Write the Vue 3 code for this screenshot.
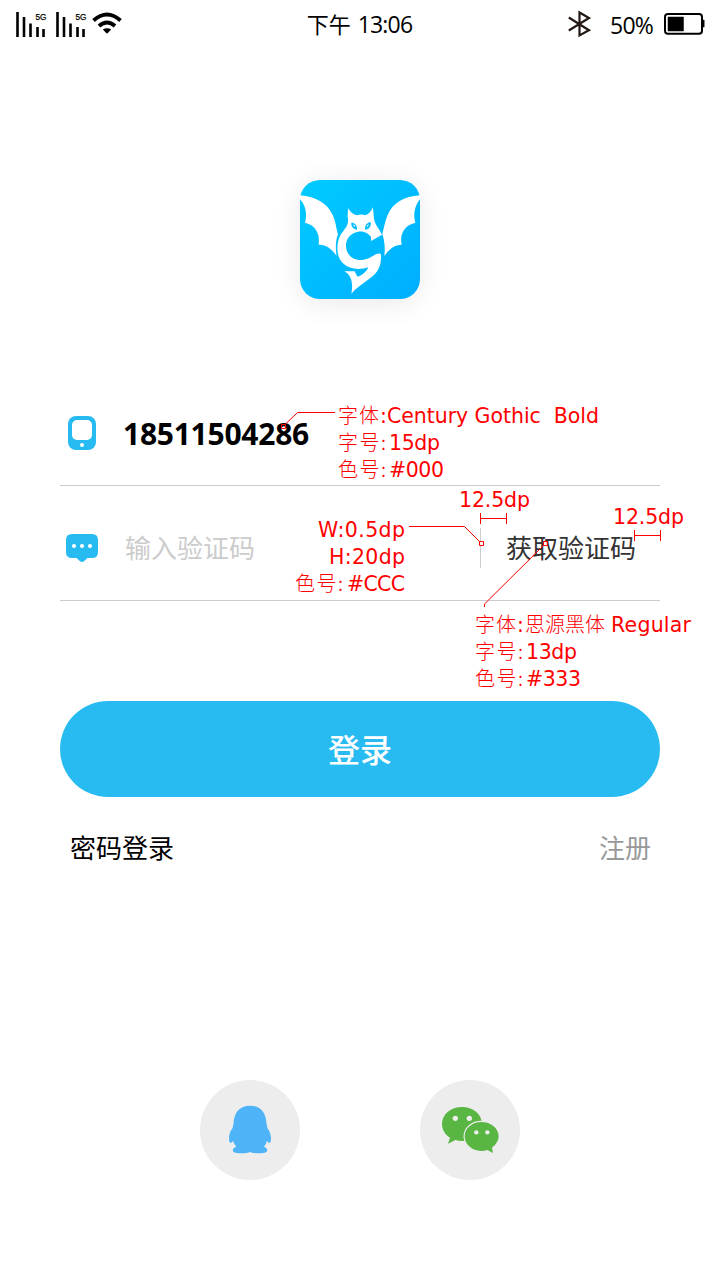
<script setup>
const notes = [
  { x: 338, y: 423, w: 41, t: '字体', thin: true },
  { x: 380, y: 423, w: 219, t: ':Century Gothic\u00a0 Bold' },
  { x: 338, y: 450, w: 48, t: '字号:', thin: true },
  { x: 389, y: 450, w: 51, t: '15dp' },
  { x: 338, y: 477, w: 48, t: '色号:', thin: true },
  { x: 389, y: 477, w: 55, t: '#000' },
  { x: 459, y: 507, w: 71, t: '12.5dp' },
  { x: 613, y: 524, w: 71, t: '12.5dp' },
  { x: 318, y: 537, w: 87, t: 'W:0.5dp' },
  { x: 329, y: 564, w: 76, t: 'H:20dp' },
  { x: 295, y: 591, w: 48, t: '色号:', thin: true },
  { x: 347, y: 591, w: 58, t: '#CCC' },
  { x: 475, y: 632, w: 41, t: '字体', thin: true },
  { x: 517, y: 632, w: 7, t: ':' },
  { x: 525, y: 632, w: 80, t: '思源黑体', thin: true },
  { x: 611, y: 632, w: 80, t: 'Regular' },
  { x: 475, y: 659, w: 48, t: '字号:', thin: true },
  { x: 526, y: 659, w: 51, t: '13dp' },
  { x: 475, y: 686, w: 48, t: '色号:', thin: true },
  { x: 526, y: 686, w: 55, t: '#333' },
]
</script>

<template>
  <div class="screen">
    <header class="status">
      <div class="left">
        <svg v-for="n in 2" :key="n" class="signal" width="40" height="28" viewBox="0 0 40 28">
          <path d="M1.5 2v25M8 7v20M14.5 13.500v13.500M21.500 17v10M27.500 19v8" stroke="#000" stroke-width="2.6" />
          <text x="19.500" y="10" textLength="11" lengthAdjust="spacingAndGlyphs">5G</text>
        </svg>
        <svg class="wifi" width="30" height="24" viewBox="0 0 30 24">
          <path d="M1.500 8.500Q15-3.500 28.500 8.500M7 14Q15 7 23 14" fill="none" stroke="#000" stroke-width="3.800" />
          <path d="M10.800 17.500Q15 14.800 19.200 17.500L15 21.800Z" />
        </svg>
      </div>
      <div class="time"><span class="ampm">下午</span><span class="clock">13:06</span></div>
      <div class="right">
        <svg width="24" height="28" viewBox="0 0 24 28">
          <path d="M.8 7.500 21 20.200 11.500 25.500V2.500L21 8 .8 20.500" fill="none" stroke="#231815" stroke-width="2.200" />
        </svg>
        <span class="percent">50%</span>
        <svg width="42" height="24" viewBox="0 0 42 24">
          <rect x="2" y="2" width="37" height="19.800" rx="3" fill="none" stroke="#000" stroke-width="2" />
          <path d="M5 5h15.500v14H5zM40 8h1.200v7H40z" stroke="#000" stroke-width=".5" />
        </svg>
      </div>
    </header>

    <div class="logo">
      <svg width="120" height="119" viewBox="30 30 360 357">
        <g fill="#fff">
          <path d="M30 76C78 80 112 100 128 135C138 158 139 177 144 193C137 210 136 234 140 258C125 236 108 223 86 224C91 190 76 165 45 158C53 132 46 105 30 88Z" />
          <path d="M390 76C342 79 308 98 292 137C284 158 281 177 277 192C284 213 286 236 283 258C299 235 315 224 335 224C328 190 345 165 376 158C369 132 374 108 390 88Z" />
          <path fill-rule="evenodd" d="M175 115C181 127 190 134 201 136C210 133 219 133 226 136C237 132 244 124 248 112C252 128 249 145 257 162C264 174 271 184 276 194L243 213V201C233 186 217 183 204 185C181 189 167 207 168 229C169 253 187 270 211 270C230 270 242 261 250 257C259 251 269 248 273 253C275 288 263 309 240 325C217 342 199 354 184 371C190 341 185 315 163 304L194 304Q199 317 204 320C219 314 230 305 235 292C199 303 169 294 153 273C138 252 139 216 153 193C163 177 175 169 174 149C172 136 173 126 175 115ZM184 158C183 171 190 177 201 179C202 167 196 158 184 158ZM242 156C230 158 224 166 225 179C236 178 244 170 242 156Z" />
        </g>
        <path d="m190 163 6 4-4 4ZM236 163l-6 4 4 4Z" fill="#fff" />
      </svg>
    </div>

    <main class="form">
      <div class="row first">
        <svg class="icon" width="32" height="34" viewBox="0 0 32 34">
          <rect x="2" width="28" height="34" rx="8" fill="#27bbf1" />
          <rect x="6" y="4" width="20" height="20" rx="5" fill="#fff" />
          <circle cx="16" cy="29" r="2" fill="#fff" />
        </svg>
        <span class="phone">18511504286</span>
      </div>
      <div class="row">
        <svg class="icon" width="32" height="28" viewBox="0 0 32 28">
          <path d="M6 0h20q6 0 6 6v12q0 6-6 6h-4.500L18 27.200q-2 1.600-4 0L10.500 24H6q-6 0-6-6V6Q0 0 6 0Z" fill="#27bbf1" />
          <g fill="#fff"><circle cx="8" cy="12" r="2.100" /><circle cx="16" cy="12" r="2.100" /><circle cx="24" cy="12" r="2.100" /></g>
        </svg>
        <span class="hint">输入验证码</span>
        <i class="divider"></i>
        <span class="getcode">获取验证码</span>
      </div>
      <button class="login">登录</button>
      <nav class="links"><span>密码登录</span><span class="register">注册</span></nav>
    </main>

    <footer class="social">
      <div class="circle">
        <svg width="100" height="100" viewBox="30 30 300 300">
          <path fill="#4eb4f7" d="M180 107C211 107 227 127 229 157C229 164 232 168 232 174C240 184 243 195 243 206C243 217 239 221 234 217L231 212Q228 223 222 230C231 233 234 240 230 245C224 251 189 251 180 246C171 251 136 251 130 245C126 240 129 233 139 230Q132 223 129 212L126 217C121 221 117 217 117 206C117 195 120 184 128 174C128 168 131 164 131 157C133 127 149 107 180 107Z" />
        </svg>
      </div>
      <div class="circle">
        <svg width="100" height="100" viewBox="30 30 300 300">
          <path fill="#59b643" d="M156 111C189 111 216 133 216 162S189 213 156 213Q146 213 136 210L114 221L120 203C105 194 96 179 96 162C96 133 123 111 156 111Z" />
          <path fill="#59b643" stroke="#ededed" stroke-width="7" paint-order="stroke" d="M214 156C243 156 266 175 266 199Q266 218 246 233L249 249L232 240Q223 243 214 243C186 243 164 223 164 199S186 156 214 156Z" />
          <g fill="#ededed"><circle cx="136" cy="145" r="8" /><circle cx="178" cy="145" r="8" /><circle cx="199" cy="187" r="6.500" /><circle cx="232" cy="187" r="6.500" /></g>
        </svg>
      </div>
    </footer>

    <svg class="notes" width="720" height="1280" viewBox="0 0 720 1280">
      <g fill="none" stroke="#f00">
        <path d="M335 412.500H297.500L285 424.500M281.500 424.500h4v4h-4zM409 526.500h55.500L480 542M484.500 607v-3L544 545M543.500 541.500h4v4h-4z" />
        <path d="M480.500 513v11M480.500 518.500h26M506.500 513v11M634.500 530v11M634.500 535.500h26M660.500 530v11" />
        <path d="M479.500 541.500h4v4h-4z" fill="#fff" />
      </g>
      <text v-for="(n, i) in notes" :key="i" :class="{ thin: n.thin }" :x="n.x" :y="n.y" :textLength="n.w" lengthAdjust="spacing">{{ n.t }}</text>
    </svg>
  </div>
</template>

<style>
body { margin: 0; background: #fff; }
</style>

<style scoped>
.screen {
  position: relative;
  width: 720px;
  height: 1280px;
  overflow: hidden;
  background: #fff;
  color: #000;
  font-family: "Noto Sans CJK SC", sans-serif;
  font-size: 26px;
}
.screen svg { display: block; flex: none; }
.status {
  display: grid;
  grid-template-columns: 1fr auto 1fr;
  align-items: center;
  height: 48px;
  padding: 0 15px 0 16px;
}
.left, .right, .time { display: flex; align-items: center; }
.right { justify-content: flex-end; }
.signal text { font: 9px "Liberation Sans", sans-serif; stroke: #000; stroke-width: 0.25px; }
.wifi { margin-left: -4px; }
.time { gap: 7px; margin-left: -2px; font-size: 22px; }
.ampm { margin-top: -3px; }
.clock, .percent { font-family: "Open Sans", sans-serif; font-size: 23px; letter-spacing: -0.8px; }
.clock { margin-top: -1px; }
.percent { margin: 1px 10px 0 18px; }
.logo {
  width: 120px;
  height: 119px;
  margin: 132px auto 0;
  border-radius: 20px;
  background: linear-gradient(135deg, #00cbff, #00aeff);
  box-shadow: 0 4px 28px rgba(0, 0, 0, 0.09);
}
.form { padding: 81px 60px 0; }
.row {
  box-sizing: border-box;
  display: flex;
  align-items: center;
  height: 115px;
  padding: 10px 24px 0 6px;
  border-bottom: 1px solid #ccc;
}
.first { height: 106px; padding-top: 1px; }
.phone {
  margin-left: 25px;
  font: 700 30px "Open Sans", sans-serif;
  letter-spacing: -0.25px;
}
.hint { margin: -3px 0 0 27px; color: #ccc; }
.divider { width: 1px; height: 40px; margin-left: auto; background: #ccc; }
.getcode { margin: -3px 0 0 25px; color: #333; }
.login {
  display: block;
  box-sizing: border-box;
  width: 600px;
  height: 96px;
  margin-top: 100px;
  padding: 0 0 3px;
  border: 0;
  border-radius: 48px;
  background: #27bbf1;
  color: #fff;
  font: 500 32px "Noto Sans CJK SC", sans-serif;
}
.links {
  display: flex;
  justify-content: space-between;
  margin-top: 31px;
  padding: 0 9px 0 10px;
  line-height: 38px;
}
.register { color: #999; }
.social { display: flex; justify-content: center; gap: 120px; margin-top: 214px; }
.circle { width: 100px; height: 100px; border-radius: 50%; background: #ededed; }
.notes { position: absolute; left: 0; top: 0; pointer-events: none; }
.notes text { fill: #f00; font: 400 20.500px "DejaVu Sans", sans-serif; }
.notes .thin { font: 300 20px "Noto Sans CJK SC", sans-serif; }
</style>
